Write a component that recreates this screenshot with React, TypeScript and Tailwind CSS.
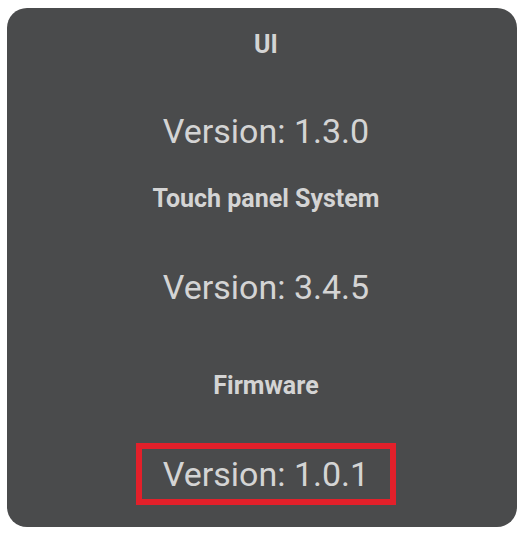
import React from "react";

export default function App() {
  return (
    <div className="w-[532px] h-[534px] bg-white pt-[8px] pl-[7px]">
      {/* Version info card */}
      <div
        className="w-[510px] h-[519px] bg-[#4a4b4c] rounded-[20px] flex flex-col items-center text-[#d4d4d4] pt-[22px] pl-[8px]"
        style={{ fontFamily: "Roboto, 'Noto Sans', sans-serif" }}
      >
        <h3 className="text-[25px] leading-[30px] font-bold">UI</h3>
        <p className="mt-[51px] text-[34px] leading-[40px]">Version: 1.3.0</p>

        <h3 className="mt-[33px] text-[25px] leading-[30px] font-bold">
          Touch panel System
        </h3>
        <p className="mt-[53px] text-[34px] leading-[40px]">Version: 3.4.5</p>

        <h3 className="mt-[64px] text-[25px] leading-[30px] font-bold">
          Firmware
        </h3>
        {/* highlighted */}
        <div className="mt-[42px] w-[260px] h-[62px] border-[6px] border-[#e3202a] flex items-center justify-center">
          <p className="text-[34px] leading-[40px]">Version: 1.0.1</p>
        </div>
      </div>
    </div>
  );
}
